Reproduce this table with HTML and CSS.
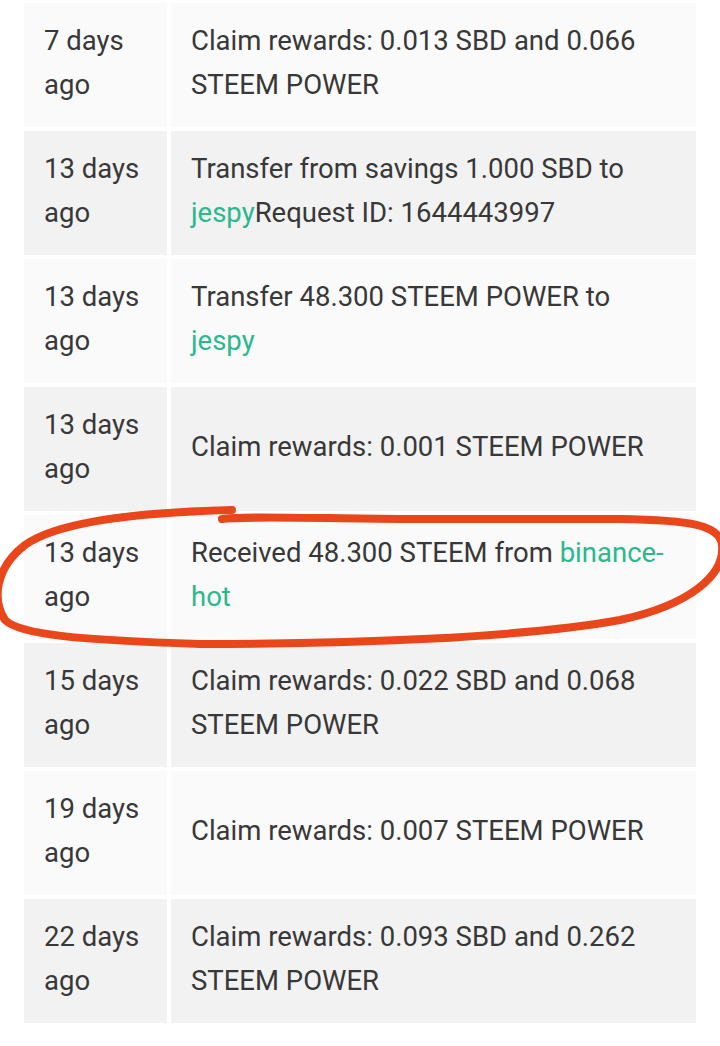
FILE: index.html
```html
<!DOCTYPE html>
<html lang="en">
<head>
    <meta charset="UTF-8">
    <meta name="viewport" content="width=device-width, initial-scale=1.0">
    <title>Wallet history</title>
    <link rel="stylesheet" href="styles.css">
</head>
<body>
    <div class="history">
        <table class="history-table">
            <tr>
                <td class="when">7 days ago</td>
                <td class="what">Claim rewards: 0.013 SBD and 0.066 STEEM POWER</td>
            </tr>
            <tr>
                <td class="when">13 days ago</td>
                <td class="what">Transfer from savings 1.000 SBD to <a href="#">jespy</a>Request ID: 1644443997</td>
            </tr>
            <tr>
                <td class="when">13 days ago</td>
                <td class="what">Transfer 48.300 STEEM POWER to <a href="#">jespy</a></td>
            </tr>
            <tr>
                <td class="when">13 days ago</td>
                <td class="what">Claim rewards: 0.001 STEEM POWER</td>
            </tr>
            <tr>
                <td class="when">13 days ago</td>
                <td class="what">Received 48.300 STEEM from <a href="#">binance-hot</a></td>
            </tr>
            <tr>
                <td class="when">15 days ago</td>
                <td class="what">Claim rewards: 0.022 SBD and 0.068 STEEM POWER</td>
            </tr>
            <tr>
                <td class="when">19 days ago</td>
                <td class="what">Claim rewards: 0.007 STEEM POWER</td>
            </tr>
            <tr>
                <td class="when">22 days ago</td>
                <td class="what">Claim rewards: 0.093 SBD and 0.262 STEEM POWER</td>
            </tr>
        </table>

        <!-- hand drawn circle round the binance-hot row -->
        <svg class="scribble" width="720" height="1046" viewBox="0 0 720 1046">
            <path d="M232 510 C150 512 60 520 25 545 C-5 568 -8 600 5 620 C20 635 80 640 200 644 C350 644 520 638 620 620 C690 605 725 575 722 545 C720 525 690 520 620 519 L400 519 C300 518 240 516 222 519"
                  fill="none" stroke="#e9461b" stroke-width="8" stroke-linecap="round" stroke-linejoin="round"/>
        </svg>
    </div>
</body>
</html>
```

FILE: styles.css
```css
body {
    margin: 0;
    background: #fff;
    font-family: Roboto, "Noto Sans", Arial, sans-serif;
    color: #383838;
}
.history {
    position: relative;
    height: 1046px;
    overflow: hidden;
}
.history-table {
    width: 680px;
    margin: -1px 20px 0;
    border-spacing: 4px;
    font-size: 27.5px;
    line-height: 44px;
}
.history-table td {
    height: 124px;
    padding: 0 20px 4px;
    box-sizing: border-box;
    vertical-align: middle;
}
.history-table tr:nth-child(odd) td { background: #fafafa; }
.history-table tr:nth-child(even) td { background: #f2f2f2; }
.when { width: 143px; }
.what a {
    color: #2bb88c;
    text-decoration: none;
}
.scribble {
    position: absolute;
    top: 0;
    left: 0;
    pointer-events: none;
}
```
